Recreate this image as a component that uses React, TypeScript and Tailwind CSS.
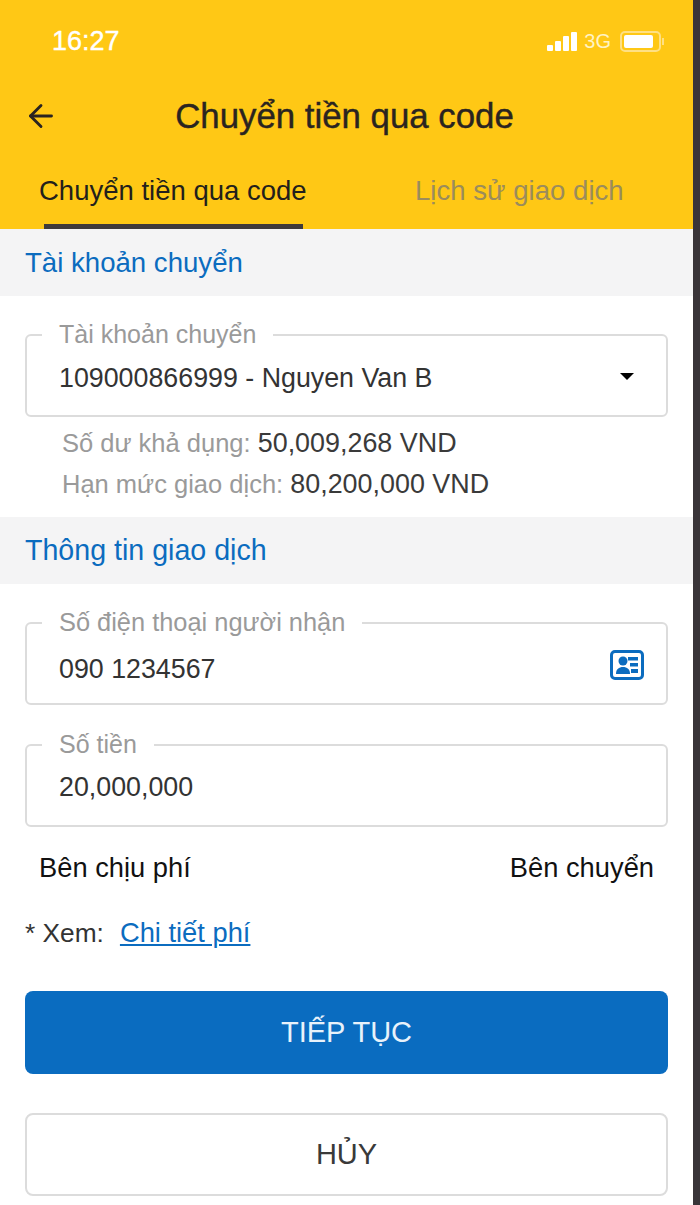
import { ArrowLeft } from "lucide-react";

function SectionTitle({ title, size }: { title: string; size: string }) {
  return (
    <div className={`flex h-[67px] items-center bg-[#f4f4f5] pl-[25px] text-[#0b6cbf] ${size}`}>
      {title}
    </div>
  );
}

function Field({ label, labelSize, children }: { label: string; labelSize: string; children: React.ReactNode }) {
  return (
    <div className="relative flex h-[83px] items-center justify-between rounded-[6px] border-2 border-[#dcdcdc] bg-white pl-[32px] pr-[22px] text-[26.8px] text-[#333333]">
      <span className={`absolute -top-[16px] left-[15px] bg-white px-[17px] leading-[28px] text-[#9a9a9a] ${labelSize}`}>
        {label}
      </span>
      {children}
    </div>
  );
}

function ContactIcon() {
  return (
    <svg width="34" height="30" viewBox="0 0 34 30" fill="none">
      <rect x="1.5" y="1.5" width="31" height="27" rx="3.5" stroke="#0b6cbf" strokeWidth="3" />
      <circle cx="13" cy="11" r="4.5" fill="#0b6cbf" />
      <path d="M6 24c0-5 3-7 7-7s7 2 7 7z" fill="#0b6cbf" />
      <path d="M18 7h10v3.5H18zM20 13h8v3.5h-8zM21 19h7v4h-7z" fill="#0b6cbf" />
    </svg>
  );
}

function StatusIcons() {
  return (
    <div className="flex items-center gap-[7px]">
      <div className="flex items-end gap-[2px]">
        <div className="h-[6px] w-[6px] rounded-[1px] bg-white" />
        <div className="h-[10px] w-[6px] rounded-[1px] bg-white" />
        <div className="h-[15px] w-[6px] rounded-[1px] bg-white" />
        <div className="h-[19px] w-[6px] rounded-[1px] bg-white" />
      </div>
      <span className="text-[20px] text-[#fff3c4]">3G</span>
      <div className="ml-[2px] flex items-center gap-[1px]">
        <div className="flex h-[21px] w-[41px] items-center rounded-[5px] border-2 border-[#ffe083] p-[2px]">
          <div className="h-full w-[29px] rounded-[2px] bg-white" />
        </div>
        <div className="h-[7px] w-[2px] bg-[#ffe083]" />
      </div>
    </div>
  );
}

export default function App() {
  return (
    <div className="flex h-[1205px] w-[700px] overflow-hidden bg-[#3a3539] font-['Liberation_Sans',Arial,sans-serif]">
      <div className="h-full w-[693px] bg-white">
        <header className="h-[229px] bg-[#ffc815]">
          <div className="flex items-center justify-between pl-[52px] pr-[29px] pt-[24px]">
            <span className="text-[27px] leading-[34px] text-white [-webkit-text-stroke:0.4px_white]">16:27</span>
            <StatusIcons />
          </div>
          <div className="relative mt-[23px] flex h-[70px] items-center justify-center pr-[4px] text-[34.8px] text-[#2a2420] [-webkit-text-stroke:0.4px_#2a2420]">
            <ArrowLeft className="absolute left-[23px] h-[36px] w-[36px]" strokeWidth={1.9} />
            Chuyển tiền qua code
          </div>
          <div className="flex h-[78px]">
            <div className="flex w-[346px] flex-col items-start pl-[39px]">
              <span className="mt-[23px] text-[27.5px] leading-[34px] text-[#231f1c]">Chuyển tiền qua code</span>
              <div className="mt-auto ml-[5px] h-[5px] w-[259px] bg-[#3f3a3a]" />
            </div>
            <span className="mt-[23px] ml-[69px] text-[27.6px] leading-[34px] text-[#9b8c5c]">Lịch sử giao dịch</span>
          </div>
        </header>

        <SectionTitle title="Tài khoản chuyển" size="text-[27.6px]" />
        <div className="h-[221px] px-[25px] pt-[38px]">
          <Field label="Tài khoản chuyển" labelSize="text-[25px]">
            <span className="mt-[6px]">109000866999 - Nguyen Van B</span>
            <div className="mt-[2px] mr-[10px] h-0 w-0 border-x-[7px] border-t-[7px] border-x-transparent border-t-black" />
          </Field>
          <div className="mt-[6px] pl-[37px] text-[25.5px] leading-[41px] text-[#9a9a9a]">
            <p>
              Số dư khả dụng: <span className="text-[26.9px] text-[#3a3a3a]">50,009,268 VND</span>
            </p>
            <p>
              Hạn mức giao dịch: <span className="text-[26.9px] text-[#3a3a3a]">80,200,000 VND</span>
            </p>
          </div>
        </div>
        <SectionTitle title="Thông tin giao dịch" size="text-[28.6px]" />

        <div className="px-[25px] pt-[38px]">
          <Field label="Số điện thoại người nhận" labelSize="text-[25.4px]">
            <span className="mt-[12px]">090 1234567</span>
            <div className="mt-[2px]">
              <ContactIcon />
            </div>
          </Field>
          <div className="mt-[39px]">
            <Field label="Số tiền" labelSize="text-[25px]">
              <span className="mt-[4px]">20,000,000</span>
            </Field>
          </div>
          <div className="mt-[24px] flex items-center justify-between px-[14px] text-[27.3px] leading-[34px] text-[#111111]">
            <span>Bên chịu phí</span>
            <span>Bên chuyển</span>
          </div>
          <div className="mt-[31px] text-[26.3px] leading-[34px] text-[#333333]">
            <span>* Xem:</span>
            <a className="ml-[16px] text-[27.3px] text-[#0b6cbf] underline">Chi tiết phí</a>
          </div>
          <button className="mt-[41px] flex h-[83px] w-full items-center justify-center rounded-[8px] bg-[#0a6cc0] text-[29px] text-[#e8f2fb]">
            TIẾP TỤC
          </button>
          <button className="mt-[39px] flex h-[83px] w-full items-center justify-center rounded-[8px] border-2 border-[#dcdcdc] bg-white text-[29px] text-[#3a3a3a]">
            HỦY
          </button>
        </div>
      </div>
    </div>
  );
}
